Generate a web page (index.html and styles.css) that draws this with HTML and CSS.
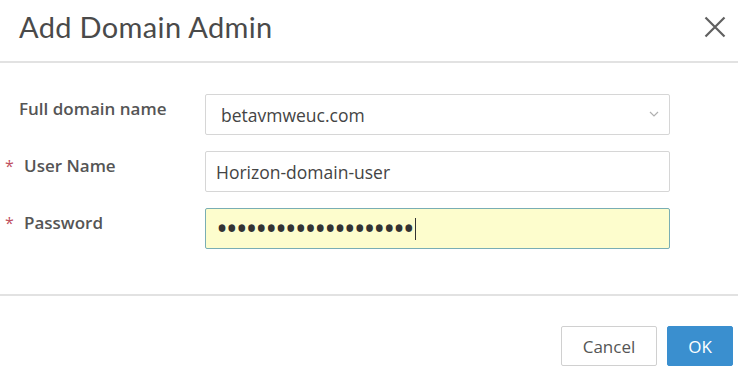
FILE: index.html
```html
<!DOCTYPE html>
<html>
<head>
<meta charset="utf-8">
<link rel="stylesheet" href="styles.css">
</head>
<body>
<div class="dialog">
  <header class="header">
    <h1 class="title">Add Domain Admin</h1>
    <button class="close" aria-label="Close">
      <svg width="22" height="22" viewBox="0 0 22 22"><path d="M1.5 1.5 L20.5 20.5 M20.5 1.5 L1.5 20.5" stroke="#606060" stroke-width="2.2" fill="none"/></svg>
    </button>
  </header>
  <main class="body">
    <div class="row">
      <div class="label">Full domain name</div>
      <div class="field select">
        <span class="value">betavmweuc.com</span>
        <svg class="chev" width="10" height="6" viewBox="0 0 10 6"><path d="M1 1 L5 5 L9 1" stroke="#b0b0b0" stroke-width="1.2" fill="none"/></svg>
      </div>
    </div>
    <div class="row">
      <div class="label"><span class="req">*</span>User Name</div>
      <div class="field input">Horizon-domain-user</div>
    </div>
    <div class="row">
      <div class="label"><span class="req">*</span>Password</div>
      <div class="field input pw"><span class="dots">••••••••••••••••••••</span><span class="caret"></span></div>
    </div>
  </main>
  <footer class="footer">
    <button class="btn cancel">Cancel</button>
    <button class="btn ok">OK</button>
  </footer>
</div>
</body>
</html>
```
FILE: styles.css
```css
* { box-sizing: border-box; }
html, body { margin: 0; padding: 0; background: #fff; }
body { width: 738px; height: 377px; overflow: hidden; font-family: "Open Sans", "Liberation Sans", sans-serif; }
.dialog { display: flex; flex-direction: column; }
.header {
  height: 63px;
  border-bottom: 2px solid #e2e2e2;
  display: flex;
  align-items: flex-start;
  justify-content: space-between;
  padding: 0 12px 0 19px;
}
.title {
  margin: 9px 0 0 0;
  font-family: "Lato", "Open Sans", sans-serif;
  font-weight: 400;
  font-size: 29px;
  letter-spacing: 0.35px;
  color: #4a4a4a;
}
.close {
  border: 0; background: none; padding: 0;
  margin-top: 16px;
  width: 22px; height: 22px;
  display: flex;
}
.body {
  padding: 31px 68px 0 19px;
  height: 233px;
  border-bottom: 2px solid #e2e2e2;
  display: flex;
  flex-direction: column;
  gap: 16px;
}
.row { display: flex; align-items: flex-start; }
.label {
  width: 186px;
  padding-top: 3px;
  font-size: 17px;
  font-weight: 600;
  color: #555;
  position: relative;
  padding-left: 5px;
}
.row:first-child .label { padding-left: 0; }
.req {
  position: absolute;
  left: -14px;
  top: 4px;
  color: #c05060;
  font-weight: 400;
  font-size: 16px;
}
.field {
  width: 465px;
  height: 41px;
  border: 1px solid #d6d6d6;
  border-radius: 2px;
  display: flex;
  align-items: center;
  font-size: 17.5px;
  color: #444;
  padding-left: 10px;
}
.select { padding-left: 15px; padding-right: 10px; justify-content: space-between; }
.chev { margin-top: -2px; }
.pw {
  background: #fdfdcd;
  border-color: #79aeb4;
}
.dots {
  font-family: "Open Sans", sans-serif;
  font-size: 32px;
  letter-spacing: -2.2px;
  color: #333;
  line-height: 1;
  margin-top: -1px;
}
.caret {
  display: inline-block;
  width: 1px;
  height: 22px;
  background: #333;
  margin-left: 2px;
}
.footer {
  display: flex;
  justify-content: flex-end;
  gap: 10px;
  padding: 30px 5px 0 0;
}
.btn {
  height: 40px;
  border-radius: 2px;
  font-family: "Open Sans", sans-serif;
  font-size: 17px;
  cursor: pointer;
}
.cancel {
  width: 96px;
  background: #fff;
  border: 1px solid #d0d0d0;
  color: #555;
}
.ok {
  width: 66px;
  background: #3a8fcf;
  border: 1px solid #3a8fcf;
  color: #fff;
}
```
